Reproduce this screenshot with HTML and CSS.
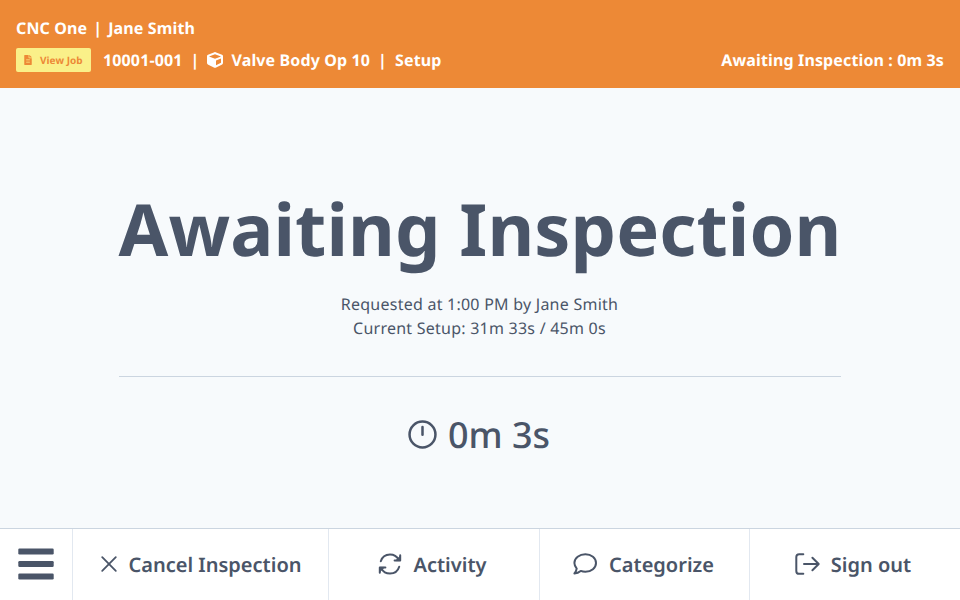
FILE: index.html
```
<!DOCTYPE html>
<html lang="en">
  <head>
    <meta charset="utf-8">
    <title>CNC One - Awaiting Inspection</title>
    <link rel="stylesheet" href="styles.css">
  </head>
  <body>
    <!-- Machine and job -->
    <header class="top-bar">
      <div class="operator">CNC One<span class="bar">|</span>Jane Smith</div>
      <div class="job-row">
        <button type="button" class="view-job">
          <svg class="icon-file" viewBox="0 0 384 512"><path fill="currentColor" d="M224 136V0H24C11 0 0 11 0 24v464c0 13 11 24 24 24h336c13 0 24-11 24-24V160H248c-13 0-24-11-24-24zm64 236c0 7-5 12-12 12H108c-7 0-12-5-12-12v-8c0-7 5-12 12-12h168c7 0 12 5 12 12v8zm0-64c0 7-5 12-12 12H108c-7 0-12-5-12-12v-8c0-7 5-12 12-12h168c7 0 12 5 12 12v8zm0-72v8c0 7-5 12-12 12H108c-7 0-12-5-12-12v-8c0-7 5-12 12-12h168c7 0 12 5 12 12zm96-114v6H256V0h6c6 0 13 3 17 7l98 98c4 4 7 11 7 17z"/></svg>
          View Job
        </button>
        <span>10001-001</span>
        <span class="sep">|</span>
        <svg class="icon-cube" viewBox="0 0 512 512"><path fill="currentColor" d="M239 6 31 84C12 91 0 109 0 129v225c0 18 10 35 27 43l208 104c13 7 29 7 42 0l208-104c17-8 27-25 27-43V129c0-20-12-38-31-45L273 6c-11-4-23-4-34 0zm17 62 192 72v1l-192 78-192-78v-1l192-72zm32 357V275l160-65v133l-160 82z"/></svg>
        <span>Valve Body Op 10</span>
        <span class="sep">|</span>
        <span>Setup</span>
        <span class="status">Awaiting Inspection : 0m 3s</span>
      </div>
    </header>

    <!-- Current state -->
    <main>
      <div class="state">
        <h1>Awaiting Inspection</h1>
        <p>Requested at 1:00 PM by Jane Smith</p>
        <p>Current Setup: 31m 33s / 45m 0s</p>
        <div class="timer">
          <svg class="icon-clock" viewBox="0 0 30 30"><circle cx="15" cy="15" r="13.4"/><path d="M15 7.3v8"/></svg>
          <span>0m 3s</span>
        </div>
      </div>
    </main>

    <!-- Actions -->
    <footer>
      <button type="button" class="menu" aria-label="Menu">
        <svg class="icon-menu" viewBox="0 0 36 32"><rect x="0.3" y="0.6" width="35.4" height="5.8" rx="1.2"/><rect x="0.3" y="13.1" width="35.4" height="5.8" rx="1.2"/><rect x="0.3" y="25.6" width="35.4" height="5.8" rx="1.2"/></svg>
      </button>
      <button type="button" class="cancel">
        <svg class="icon-close" viewBox="0 0 16 16"><path d="M1.2 1.2l13.6 13.6M14.8 1.2L1.2 14.8"/></svg>
        Cancel Inspection
      </button>
      <button type="button">
        <svg class="icon" viewBox="0 0 24 24"><path d="M2.8 9.2C4.1 4.9 7.5 2.4 12 2.4c4 0 7 2 8.8 5.4M22.2 3.2v5.4h-5.6M21.2 14.8c-1.3 4.3-4.7 6.8-9.2 6.8-4 0-7-2-8.8-5.4M1.8 20.8v-5.4h5.6"/><path class="tip" d="M22.2 4.5v4.1h-4zM1.8 19.5v-4.1h4z"/></svg>
        Activity
      </button>
      <button type="button" class="categorize">
        <svg class="icon" viewBox="0 0 24 24"><path d="M12.4 2.3c6 0 10.6 3.8 10.6 8.7s-4.6 8.8-10.6 8.8c-1.7 0-3.3-.3-4.7-.9-1.7 1.4-3.6 2.3-6.3 2.5 1.2-1.3 2-2.9 2.3-4.7C2.4 15 1.4 13.1 1.4 11c0-4.9 5-8.7 11-8.7z"/></svg>
        Categorize
      </button>
      <button type="button">
        <svg class="icon" viewBox="0 0 24 24"><path d="M8.3 2.2H4.2c-1.7 0-2.9 1.2-2.9 2.9v13.8c0 1.7 1.2 2.9 2.9 2.9h4.1M9 12h14.5M17.4 5.8l6.3 6.2-6.3 6.2"/></svg>
        Sign out
      </button>
    </footer>
  </body>
</html>
```

FILE: styles.css
```
* {
  box-sizing: border-box;
}

body {
  margin: 0;
  height: 100vh;
  display: flex;
  flex-direction: column;
  font-family: "Noto Sans", sans-serif;
  font-size: 16px;
  line-height: 24px;
  text-rendering: geometricPrecision;
  color: #4a5568;
  background: #f7fafc;
}

button {
  font: inherit;
  color: inherit;
  border: none;
  background: none;
  padding: 0;
  cursor: pointer;
  text-rendering: inherit;
}

svg {
  display: block;
  flex: none;
  overflow: visible;
}

/* Header */
.top-bar {
  height: 88px;
  padding: 16px;
  background: #ed8936;
  color: #fff;
  font-weight: 700;
  letter-spacing: 0.13px;
}

.bar {
  margin: 0 6px;
}

.job-row {
  display: flex;
  align-items: center;
  margin-top: 8px;
}

.view-job {
  display: flex;
  align-items: center;
  width: 75px;
  height: 24px;
  padding-left: 8px;
  margin-right: 12px;
  gap: 8px;
  border-radius: 2px;
  background: #faf089;
  color: #ed8936;
  font-size: 10px;
  font-weight: 700;
  letter-spacing: 0.05px;
  white-space: nowrap;
}

.icon-file {
  width: 8px;
  height: 10px;
}

.sep {
  margin: 0 8px;
}

.icon-cube {
  width: 16px;
  height: 16px;
  margin-right: 8px;
}

.status {
  margin-left: auto;
}

/* Main */
main {
  flex: 1;
  display: flex;
  justify-content: center;
  align-items: center;
  padding-top: 28px;
}

.state {
  text-align: center;
}

h1 {
  margin: 0 0 17px;
  font-size: 72px;
  line-height: 92px;
  font-weight: 700;
  letter-spacing: 0.09px;
}

p {
  margin: 0;
  padding-right: 1px;
  letter-spacing: 0.24px;
}

.timer {
  display: flex;
  justify-content: center;
  align-items: center;
  gap: 11px;
  margin-top: 36px;
  padding: 31px 2px 0 0;
  border-top: 1px solid #cbd5e0;
  font-size: 36px;
  line-height: 54px;
  font-weight: 500;
}

.icon-clock {
  width: 29px;
  height: 29px;
  fill: none;
  stroke: currentColor;
  stroke-width: 2.6;
  stroke-linecap: round;
}

/* Footer */
footer {
  display: grid;
  grid-template-columns: 73px 256px 211px 1fr 1fr;
  height: 72px;
  background: #fff;
  border-top: 1px solid #cbd5e0;
}

footer button {
  display: flex;
  justify-content: center;
  align-items: center;
  gap: 12px;
  padding-right: 4px;
  border-right: 1px solid #e2e8f0;
  font-size: 20px;
  font-weight: 600;
}

footer button:last-child {
  border-right: none;
}

footer .menu {
  padding-right: 0;
}

footer .cancel {
  padding: 0 0 0 1px;
}

footer .categorize {
  padding-right: 2px;
}

footer svg {
  margin-bottom: 2px;
}

.icon-menu {
  width: 36px;
  height: 32px;
  fill: currentColor;
}

.icon-close {
  width: 16px;
  height: 16px;
  fill: none;
  stroke: currentColor;
  stroke-width: 1.8;
  stroke-linecap: round;
}

.icon {
  width: 24px;
  height: 24px;
  fill: none;
  stroke: currentColor;
  stroke-width: 2;
  stroke-linecap: round;
  stroke-linejoin: round;
}

.icon .tip {
  fill: currentColor;
  stroke-width: 1;
}
```
